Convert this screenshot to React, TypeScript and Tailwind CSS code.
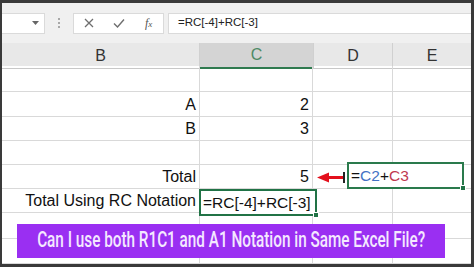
import React from "react";

const rows = [
  { h: "h-[26px]", b: "", c: "" },
  { h: "h-[25px]", b: "A", c: "2" },
  { h: "h-[24px]", b: "B", c: "3" },
  { h: "h-[24px]", b: "", c: "" },
  { h: "h-[24px]", b: "Total", c: "5" },
  { h: "h-[24px]", b: "Total Using RC Notation", c: "" },
  { h: "h-[26px]", b: "", c: "" },
  { h: "h-[25px]", b: "", c: "" },
];

const cols = "grid grid-cols-[198px_113px_80px_1fr]";

export default function App() {
  return (
    <div className="w-[474px] h-[267px] bg-[#3a3a3a] pt-[3px] pl-[2px] pr-[3px] pb-[3px] font-['Liberation_Sans',Arial,sans-serif]">
      <div className="relative w-full h-full bg-white overflow-hidden flex flex-col">
        {/* formula bar */}
        <div className="h-[40px] bg-[#f0f0f0] flex items-center shrink-0">
          <div className="w-[43px] h-[21px] bg-white border border-[#dadada] border-l-0 flex items-center justify-end pr-[5px]">
            <svg width="7" height="4" viewBox="0 0 7 4">
              <path d="M0 0 H7 L3.5 4 Z" fill="#666" />
            </svg>
          </div>
          <div className="w-[28px] flex flex-col items-center gap-[2px]">
            <div className="w-[2px] h-[2px] bg-[#a8a8a8]" />
            <div className="w-[2px] h-[2px] bg-[#a8a8a8]" />
            <div className="w-[2px] h-[2px] bg-[#a8a8a8]" />
          </div>
          <div className="w-[91px] h-[21px] bg-white border border-[#dadada] flex items-center">
            <svg width="10" height="10" viewBox="0 0 10 10" className="ml-[10px]">
              <path d="M1 1 L9 9 M9 1 L1 9" stroke="#6e6e6e" strokeWidth="1.3" />
            </svg>
            <svg width="12" height="10" viewBox="0 0 12 10" className="ml-[19px]">
              <path d="M1 5.5 L4.5 9 L11 1.5" stroke="#6e6e6e" strokeWidth="1.4" fill="none" />
            </svg>
            <span className="ml-[20px] text-[12px] italic text-[#555] font-['Liberation_Serif',serif] leading-none">
              f<span className="text-[9px]">x</span>
            </span>
          </div>
          <div className="ml-[4px] flex-1 h-[21px] bg-white border border-[#dadada] border-r-0 flex items-center pl-[9px] text-[11.5px] text-[#222]">
            =RC[-4]+RC[-3]
          </div>
        </div>

        {/* column headers */}
        <div className={`${cols} h-[23px] bg-[#e8e8e8] shrink-0 text-[16px] text-[#333]`}>
          <div className="flex items-center justify-center border-r border-[#d0d0d0] border-b border-b-[#c8c8c8]">B</div>
          <div className="flex items-center justify-center bg-[#d4d4d4] border-b-2 border-[#2f7a4f] text-[#4d8a66]">C</div>
          <div className="flex items-center justify-center border-r border-l border-[#d0d0d0] border-b border-b-[#c8c8c8]">D</div>
          <div className="flex items-center justify-center border-b border-[#c8c8c8]">E</div>
        </div>

        {/* grid rows */}
        <div className="flex flex-col text-[16px] text-[#111]">
          {rows.map((r, i) => (
            <div key={i} className={`${cols} ${r.h}`}>
              <div className="border-r border-b border-[#d9d9d9] flex items-end justify-end pr-[3px] pb-[3px] leading-none whitespace-nowrap">
                {r.b}
              </div>
              <div className="border-r border-b border-[#d9d9d9] flex items-end justify-end pr-[3px] pb-[3px] leading-none">
                {r.c}
              </div>
              <div className="border-r border-b border-[#d9d9d9]" />
              <div className="border-b border-[#d9d9d9]" />
            </div>
          ))}
        </div>

        {/* active cell */}
        <div className="absolute left-[197px] top-[186px] w-[118px] h-[27px] border-2 border-[#217346] bg-white flex items-end pl-[2px] pb-[4px] text-[15.5px] leading-none text-[#111] whitespace-nowrap">
          =RC[-4]+RC[-3]
          <div className="absolute -right-[4px] -bottom-[4px] w-[6px] h-[6px] bg-[#217346] border border-white" />
        </div>

        {/* arrow */}
        <svg className="absolute left-[315px] top-[169px]" width="26" height="11" viewBox="0 0 26 11">
          <path d="M0 5.5 L12 0.5 L12 4 L26 4 L26 7 L12 7 L12 10.5 Z" fill="#e3101c" />
        </svg>
        <div className="absolute left-[341px] top-[169px] w-[2px] h-[11px] bg-[#222]" />

        {/* edit box */}
        <div className="absolute left-[345px] top-[159px] w-[117px] h-[27px] border-2 border-[#2a7a4c] bg-white flex items-end pl-[2px] pb-[4px] text-[15.5px] leading-none whitespace-nowrap">
          <span className="text-[#111]">=</span>
          <span className="text-[#4472c4]">C2</span>
          <span className="text-[#111]">+</span>
          <span className="text-[#c0394f]">C3</span>
          <div className="absolute -right-[4px] -bottom-[4px] w-[6px] h-[6px] bg-[#217346] border border-white" />
        </div>

        {/* banner */}
        <div className="absolute left-[15px] top-[221px] w-[428px] h-[34px] bg-[#9a2ff2] flex items-center justify-center overflow-visible">
          <span className="inline-block whitespace-nowrap font-['Roboto',sans-serif] font-medium text-[22px] leading-none text-[#f4e8ff] scale-x-[0.695] -mt-[3px]">
            Can I use both R1C1 and A1 Notation in Same Excel File?
          </span>
        </div>
      </div>
    </div>
  );
}
